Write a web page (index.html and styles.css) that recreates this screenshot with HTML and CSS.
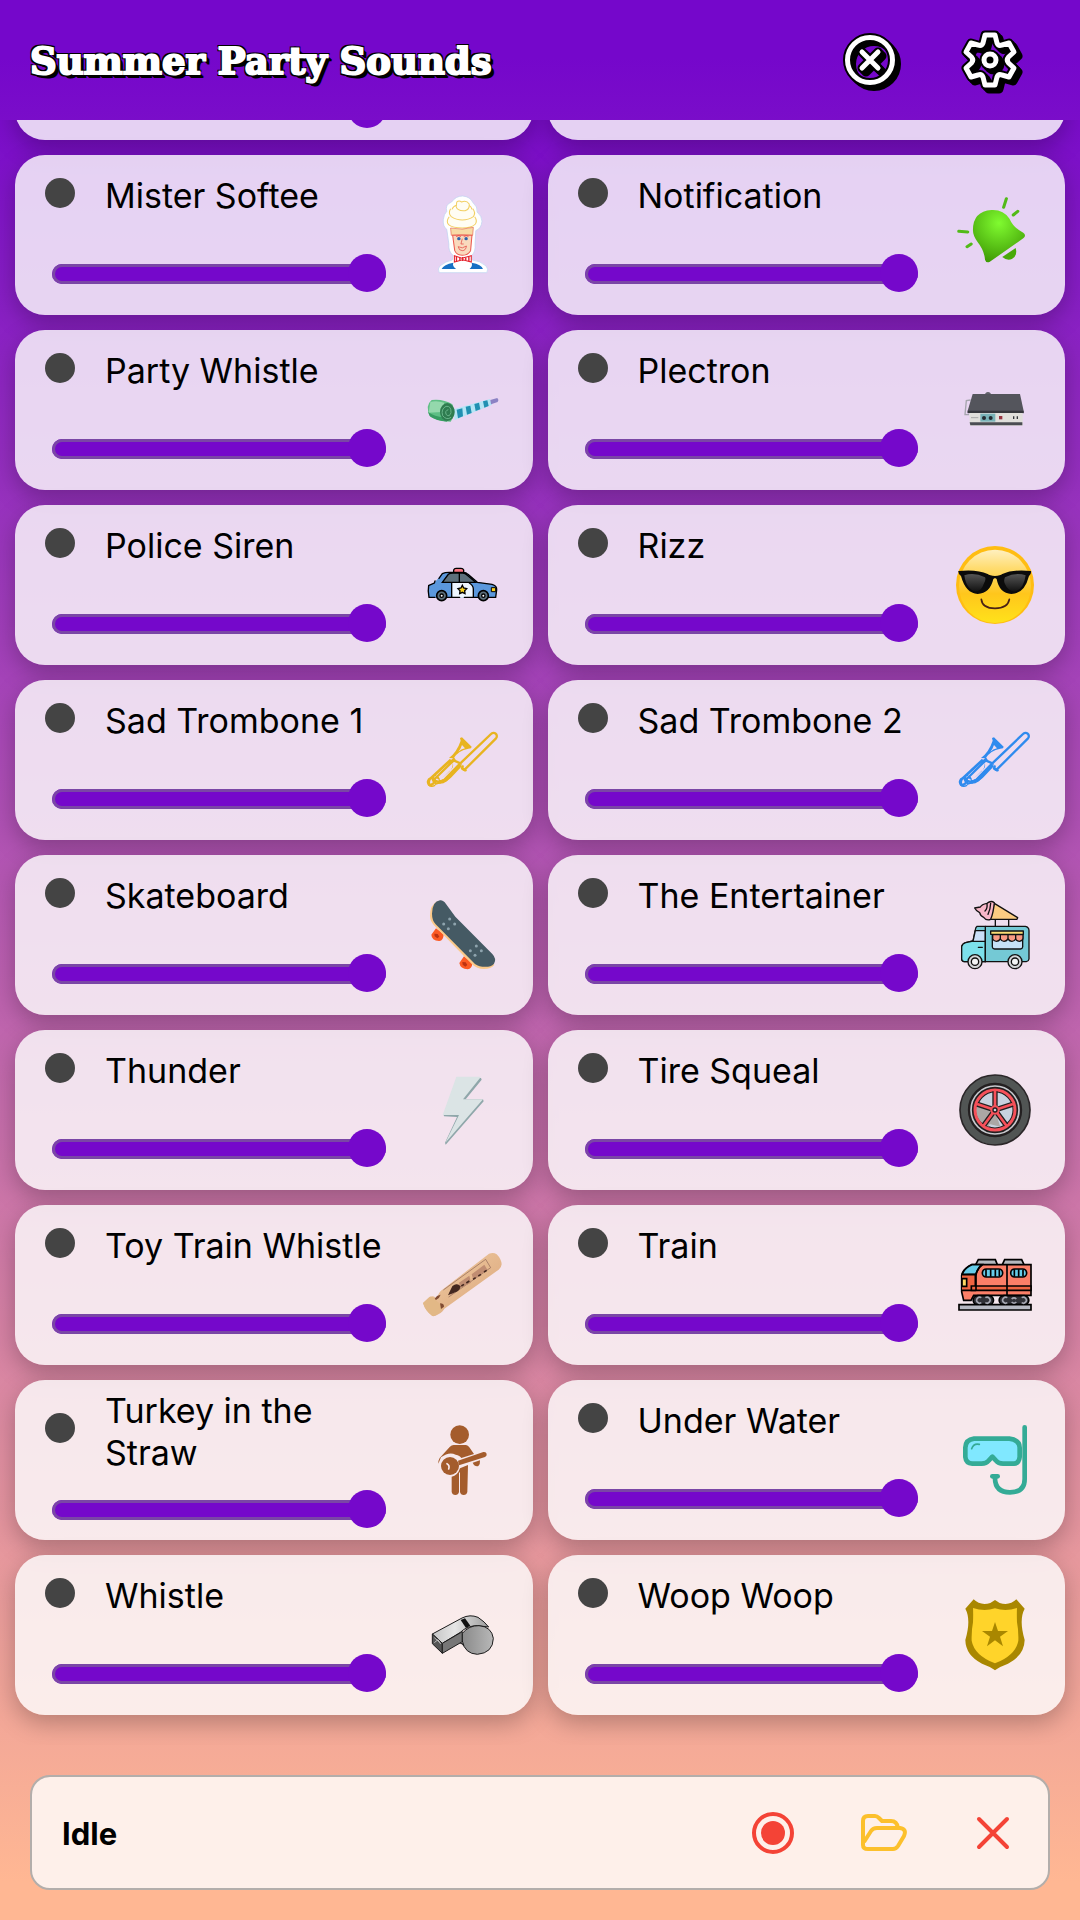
FILE: index.html
```html
<!DOCTYPE html>
<html lang="en">
<head>
  <meta charset="UTF-8" />
  <meta name="viewport" content="width=device-width, initial-scale=1.0" />
  <title>Summer Party Sounds</title>
  <link rel="stylesheet" href="styles.css">
</head>
<body>
  <svg class="sprite" aria-hidden="true">
    <defs>
      <radialGradient id="bellFill" cx="0.5" cy="0.25" r="0.75">
        <stop offset="0" stop-color="#80fb30" />
        <stop offset="1" stop-color="#409c05" />
      </radialGradient>
      <linearGradient id="faceFill" x1="0" y1="0" x2="0" y2="1">
        <stop offset="0" stop-color="#fff0c0" />
        <stop offset="0.25" stop-color="#ffdc70" />
        <stop offset="0.6" stop-color="#ffc61c" />
        <stop offset="1" stop-color="#ffe21a" />
      </linearGradient>
      <linearGradient id="lensFill" x1="0" y1="0" x2="0" y2="1">
        <stop offset="0" stop-color="#555" />
        <stop offset="1" stop-color="#111" />
      </linearGradient>
      <linearGradient id="woodFill" x1="0" y1="0" x2="1" y2="1">
        <stop offset="0" stop-color="#f2cfa6" />
        <stop offset="1" stop-color="#d9a378" />
      </linearGradient>
      <linearGradient id="metalFill" x1="0" y1="0" x2="1" y2="0">
        <stop offset="0" stop-color="#8a8a8a" />
        <stop offset="1" stop-color="#b8b8b8" />
      </linearGradient>
      <linearGradient id="metalTop" x1="0" y1="0" x2="1" y2="0">
        <stop offset="0" stop-color="#c4c4c4" />
        <stop offset="0.4" stop-color="#e6e6e6" />
        <stop offset="1" stop-color="#9c9c9c" />
      </linearGradient>
      <path id="gearShape" d="M-5-25H5L7-17Q8.5-13.500 12-15L19-17L24-8L18.500-3Q16 0 18.500 3L24 8L19 17L12 15Q8.500 13.500 7 17L5 25H-5L-7 17Q-8.500 13.500-12 15L-19 17L-24 8L-18.500 3Q-16 0-18.500-3L-24-8L-19-17L-12-15Q-8.500-13.500-7-17ZM6 0A6 6 0 1 1-6 0A6 6 0 1 1 6 0Z" />
      <path id="stopShape" d="M22.500 0A22.500 22.500 0 1 1-22.500 0A22.500 22.500 0 1 1 22.500 0ZM-8-8L8 8M8-8L-8 8" />
    </defs>

    <symbol id="softee" viewBox="1228 585 232 240" preserveAspectRatio="none">
      <path d="M1343 588q22 2 30 20q14 12 12 28q14 12 14 28q-2 22-18 28l-2 40q2 24-10 34l2 14q22 2 40 18q8 10 2 20h-138q-6-12 2-20q16-14 36-18l2-14q-14-12-12-34l-6-44q-12-8-10-30q2-16 10-24q-6-20 14-28q12-18 32-18Z" fill="#fff" stroke="#bcd3f0" stroke-width="2" />
      <g fill="#fffdf3" stroke="#f2cf62" stroke-width="3">
        <path d="M1304 650q-10 14-2 24q12 10 40 10t38-12q6-10-2-22" />
        <path d="M1308 626q-8 14 2 24q14 10 32 10t32-10q8-12-2-24" />
        <path d="M1326 606q6-6 14 0q14-6 22 6q2 16-12 20q-22 2-26-12Z" />
        <path d="M1312 628q4-10 14-12M1370 628q-2-8-8-12" />
      </g>
      <path d="M1308 684q34 8 66-2l-2 24q-30-4-62 0Z" fill="#f7dba7" stroke="#e56a50" stroke-width="2" />
      <path d="M1314 706h56l-4 46q-8 14-24 14t-22-14Z" fill="#f9d9bd" stroke="#ec5a50" stroke-width="3" />
      <circle cx="1332" cy="716" r="5" fill="#2e62a8" /><circle cx="1353" cy="716" r="5" fill="#2e62a8" />
      <path d="M1324 710q8-6 14 0M1346 710q8-6 14 0M1342 716l-4 16h8M1330 740q12 8 24-2q-2 14-12 14t-12-12Z" fill="none" stroke="#e23c3c" stroke-width="2" />
      <path d="M1319 767l22 8l27-8v19l-25-7l-24 7Z" fill="#fff" stroke="#e5202b" stroke-width="3" />
      <path d="M1325 770v14M1335 773v8M1343 771v12M1352 773v8M1361 770v14" stroke="#e5202b" stroke-width="4" />
      <path d="M1282 807q6-14 34-19q-4 10 8 19ZM1402 807q-4-14-33-19q4 10-6 19Z" fill="#1871c4" />
    </symbol>

    <symbol id="bell" viewBox="1205 585 232 240" preserveAspectRatio="none">
      <path d="M1257 690q0-56 54-60q34-2 52 26q12 28 40 42q10 8 0 17l-98 71q-10 4-13-7q-2-28-22-54q-13-18-13-35Z" fill="url(#bellFill)" />
      <path d="M1342 771l39-27q6 24-11 33q-14 6-28-6Z" fill="#48a909" />
      <path d="M1354 596l-8 26M1374 645l13-11M1216 694l26 2M1240 740l12-8" stroke="#52ba18" stroke-width="9" stroke-linecap="round" />
    </symbol>

    <symbol id="blower" viewBox="69 90 240 240">
      <path d="M160 208l110-31l6 17l-112 46Z" fill="#b5e5f5" />
      <path d="M170 209l17-4l2 24l-15 6ZM197 200l14-3l4 22l-14 5ZM223 192l14-4l4 20l-14 5ZM249 184l13-3l4 17l-13 5Z" fill="#2190b2" />
      <path d="M271 180l21-6q6 6 1 12l-20 7Z" fill="#8b82c4" />
      <path d="M95 180q35-4 62 13q14 27-5 52q-37-2-61-15q-18-32 4-50Z" fill="#5fbf85" />
      <path d="M91 186q18-6 42 2l-9 28l-38 2Z" fill="#94d8ac" />
      <path d="M84 216q20 14 48 16l10 13q-34-2-53-17Z" fill="#379c62" />
      <ellipse cx="142" cy="216" rx="22" ry="27" fill="#2f7c50" />
      <path d="M145 209q-12 4-6 15q9 9 14-6q1-21-15-19q-16 8-10 28q12 15 25 5" fill="none" stroke="#69b58a" stroke-width="3" />
    </symbol>

    <symbol id="plectron" viewBox="45 90 240 240">
      <path d="M92 180l-13 2l-4 42h12" fill="none" stroke="#a5a5ad" stroke-width="4" />
      <path d="M136 160q8-8 16 0v5h-16Z" fill="#62636b" />
      <path d="M98 162h142l11 51v7H83v-8Z" fill="#54555c" />
      <path d="M83 212h168v7H83Z" fill="#36373d" />
      <path d="M88 219h160v38H90Z" fill="#e0dfdb" />
      <path d="M89 247h158v9H91Z" fill="#4b4d53" />
      <path d="M121 221h45v24h-45Z" fill="#79b3b8" />
      <circle cx="132" cy="234" r="6" fill="#252c32" /><circle cx="152" cy="234" r="6" fill="#252c32" />
      <path d="M177 228h10v10h-10Z" fill="#983440" />
      <path d="M221 229v8M232 229v8" stroke="#33353b" stroke-width="4" />
      <path d="M93 233h22" stroke="#a8a8a8" stroke-width="3" />
    </symbol>

    <symbol id="police" viewBox="69 615 240 240">
      <path d="M85 736l18-8l24-27q8-4 20-4h42q10 0 15 6l28 24l44 6q15 4 14 16l-3 24H87q-4-18-2-37Z" fill="#5b98dc" />
      <path d="M154 729h54q12 8 12 18v26h-63Z" fill="#eef6ff" />
      <path d="M127 727l18-24q5-4 14-4h29q8 0 13 6l26 22Z" fill="#5d707b" stroke="#000" stroke-width="4" />
      <path d="M178 700v27M155 729v43M208 729q12 8 12 18v25M87 736l16-7l2-6M127 701l-10 14M127 701q8-4 20-4h42q10 0 15 6l28 24l44 6q15 4 14 16l-3 23h-24M86 736q-3 18 1 36h18M142 772h37M193 772h40" fill="none" stroke="#000" stroke-width="4" stroke-linecap="round" />
      <path d="M161 697v-7q2-5 7-5h15q6 0 8 5v7Z" fill="#fb7682" stroke="#000" stroke-width="4" />
      <circle cx="125" cy="767" r="15" fill="#5d707b" stroke="#000" stroke-width="5" /><circle cx="125" cy="767" r="5" fill="#fff" stroke="#000" stroke-width="4" />
      <circle cx="250" cy="767" r="15" fill="#5d707b" stroke="#000" stroke-width="5" /><circle cx="250" cy="767" r="5" fill="#fff" stroke="#000" stroke-width="4" />
      <path d="M274 743h13v12h-13Z" fill="#fbd320" stroke="#000" stroke-width="3" />
      <path d="M187 736l4 8l9 2l-6 6l1 9l-8-4l-8 4l1-9l-6-6l9-2Z" fill="#fbd320" stroke="#000" stroke-width="4" />
    </symbol>

    <symbol id="rizz" viewBox="45 615 240 240">
      <circle cx="165" cy="735" r="117" fill="#ffbd12" />
      <ellipse cx="165" cy="739" rx="108" ry="110" fill="url(#faceFill)" />
      <path d="M55 693q56-6 88 9q6 5 22 6q16-1 22-6q32-15 86-9q2 8-6 15q-14 54-53 54q-36-2-44-45l-5-3l-5 3q-10 43-47 45q-36-2-50-54q-9-6-8-15Z" fill="#0b0b0b" />
      <path d="M73 706q30-10 62 6q4 6-4 20q-6 20-24 23q-28-6-34-49ZM195 712q32-16 62-6q-6 43-34 49q-20-3-28-23q-5-10 0-20Z" fill="url(#lensFill)" />
      <path d="M124 778q3 27 41 27t43-27" fill="none" stroke="#4a2115" stroke-width="5" stroke-linecap="round" />
    </symbol>

    <symbol id="trombone" viewBox="69 90 240 240">
      <path d="M161 211l-57 56a14 14 0 0 1-17 17M181 220l92-88a9 9 0 0 1 15 13l-94 94M161 211l20 9l-49 50q-12 10-28 2M190 238l7 3M188 229l-2 7" fill="none" stroke="currentColor" stroke-width="7" stroke-linecap="round" />
      <path d="M150 206l-60 56a15 15 0 1 0 18 22l25-8q9-2 20-13l34-36l-14-2l-39 41q-8 5-15 5l30-27q12-14 8-24l10-11l-5-7l-9 8Zm-46 53q14-2 16 10l-9 9q-10-3-7-19Zm-10 8q3 12 12 16q-6 5-12 2q-8-7 0-18Zm15-12l36-33q10-6 14 1q2 8-5 15l-34 32q-14-4-11-15Z" fill="currentColor" fill-rule="evenodd" />
      <path d="M147 204q24-19 35-52l-2-8l6-2l29 28l-2 5l-8 1q-30 5-44 29Zm39-39q-5 15-11 20q8-7 20-10Z" fill="currentColor" fill-rule="evenodd" />
      <path d="M118 272q12 2 24-10l32-34l7-2l-43 47q-10 8-22 6Z" fill="currentColor" stroke="currentColor" stroke-width="4" />
      <path d="M188 236l8 5" fill="none" stroke="currentColor" stroke-width="8" />
    </symbol>

    <symbol id="skateboard" viewBox="69 615 240 240">
      <path d="M94 734l14-19l23 18q-1 21-14 20q-22-1-23-19ZM178 819l14-20l25 20q-1 18-14 19q-22-1-25-19Z" fill="#fb5a24" />
      <path d="M103 731l10 1l5 8l-6 5l-8-6ZM187 816l10 1l5 8l-6 5l-8-6Z" fill="#bd3211" />
      <path d="M112 634q-22 10-22 44q0 16 15 31l111 114q14 14 36 14q21 0 31-12Z" fill="#fbc989" />
      <path d="M120 631q10-1 18 11l28 38l111 112q14 15 5 29q-11 12-35 9q-17-1-28-14L107 703q-11-12-11-32q1-37 24-40Z" fill="#455a64" />
      <g fill="#8fa4ae">
        <circle cx="149" cy="687" r="4.500" /><circle cx="131" cy="702" r="4.500" /><circle cx="164" cy="702" r="4.500" /><circle cx="145" cy="716" r="4.500" />
        <circle cx="229" cy="768" r="4.500" /><circle cx="211" cy="782" r="4.500" /><circle cx="244" cy="782" r="4.500" /><circle cx="225" cy="796" r="4.500" />
      </g>
    </symbol>

    <symbol id="truck" viewBox="45 615 240 240">
      <g stroke="#111" stroke-width="4" stroke-linejoin="round" stroke-linecap="round">
        <path d="M166 687v22M206 687v22" fill="none" />
        <path d="M163 640l70 43l-2 5h-81Z" fill="#fccd82" />
        <path d="M163 638q-10-8-22 2q-16 3-20 11l-17 3q5 10 15 14q2 10 12 14q8 11 21 6q8-18 11-50Z" fill="#f7b6c8" />
        <path d="M141 641q2 15-6 22M152 640q-1 20-8 33" fill="none" />
        <path d="M111 709h145q11 2 11 13v85q-1 7-8 8H72q-7-2-7-9v-36q2-9 12-12l22-5l7-34q1-8 5-10Z" fill="#74c9d5" />
        <path d="M65 770q2-9 12-12l22-5h37v62H72q-7-2-7-9Z" fill="#7ce0eb" />
        <path d="M106 722h30v32H99Z" fill="#cbdff8" />
        <path d="M136 709v106M115 772h12" fill="none" />
        <path d="M157 734h91v37q-1 6-7 6h-77q-6 0-7-6Z" fill="#c6e1f6" />
        <path d="M158 734h91v11q0 7-11 9q-9-1-11-7q-4 7-11 7t-12-7q-5 7-12 7t-11-7q-5 7-12 7t-11-7Z" fill="#f99b84" />
        <path d="M181 735v12M204 735v12M227 735v12" fill="none" />
        <path d="M152 723h98v10h-98Z" fill="#fadc74" />
        <circle cx="105" cy="815" r="21" fill="#d5d7da" /><circle cx="105" cy="815" r="11" fill="#f4f5f6" />
        <circle cx="225" cy="815" r="21" fill="#d5d7da" /><circle cx="225" cy="815" r="11" fill="#f4f5f6" />
      </g>
    </symbol>

    <symbol id="thunder" viewBox="69 90 240 240">
      <path d="M173 112l70 2l2 5l-48 59h52l2 6L137 314l-2-6l36-77l-39-2l-1-5Z" fill="#8fa7aa" />
      <path d="M169 110h74l-54 68h60L136 308l41-83h-49Z" fill="#dbe4e5" />
    </symbol>

    <symbol id="tire" viewBox="45 90 240 240">
      <circle cx="165" cy="210" r="105" fill="#515554" stroke="#2a2628" stroke-width="5" />
      <circle cx="165" cy="210" r="78" fill="#c7c9ce" stroke="#231f20" stroke-width="7" />
      <circle cx="165" cy="210" r="61" fill="#c8d2df" stroke="#231f20" stroke-width="17" />
      <path d="M108 196l55 14l-17 50q-44-17-38-64ZM148 252l17-38l16 46Z" fill="#aba7a5" />
      <circle cx="165" cy="210" r="60" fill="none" stroke="#f6515a" stroke-width="9" />
      <path d="M165 210v-56M165 210l53-17M165 210l33 45M165 210l-33 45M165 210l-53-17" stroke="#231f20" stroke-width="16" />
      <path d="M165 210v-58M165 210l54-18M165 210l35 48M165 210l-35 48M165 210l-54-18" stroke="#f6515a" stroke-width="8" />
      <circle cx="165" cy="210" r="14" fill="#f6515a" /><circle cx="165" cy="210" r="6" fill="#c8d2df" stroke="#231f20" stroke-width="4" />
    </symbol>

    <symbol id="woodWhistle" viewBox="69 615 240 240">
      <path d="M69 789l19-18q10-5 17 0l5 6q4-20 20-30L267 641q14-5 23 2q14 14 15 30q-1 11-9 16L133 806q-3 8-18 17q-9 7-18 5q-20-14-28-39Z" fill="url(#woodFill)" />
      <path d="M69 789l21-19q10 0 17 10l24 22q-16 26-34 26q-22-16-28-39Z" fill="#e2b886" />
      <path d="M104 776l7-8l11-4q-4 12-14 16ZM120 790q12 0 12 10l-9 7Z" fill="#804b32" />
      <path d="M130 750l127-92l15 25l-126 88" fill="none" stroke="#8c6455" stroke-width="2" />
      <path d="M147 760l9-18q12-14 24-6l-5 11l-13 7l-5 11ZM177 728l31-21l5 21l-31 16ZM215 703l38-29l9 15l-42 30Z" fill="#c08d72" />
      <path d="M149 761l10-21q11-9 20 0q-3 11-16 15ZM184 738l8-5M199 729l9-6M219 718l8-5M235 708l8-5M252 696l8-5" fill="#442820" stroke="#442820" stroke-width="5" />
    </symbol>

    <symbol id="train" viewBox="45 615 240 240">
      <g stroke="#000" stroke-width="5">
        <path d="M107 674l8-15h51l6 15M187 674l7-15h51l7 15" fill="#b6b9bf" />
        <path d="M94 674h179v92h-172l-8 15H71l-6-25v-49q3-20 29-33Z" fill="#fb7f68" />
        <path d="M66 704q7-20 30-30h29q-10 8-17 28Z" fill="#66cce9" />
        <path d="M66 704h40v47H66" fill="#ef6441" />
        <path d="M94 738h179v13H94Z" fill="#ef6441" />
        <path d="M66 716h14v23H66Z" fill="#fbd763" />
        <path d="M201 674v92M128 674q-20 14-20 34v43" fill="none" />
        <rect x="127" y="687" width="61" height="24" rx="12" fill="#66cce9" />
        <rect x="212" y="687" width="48" height="24" rx="12" fill="#66cce9" />
        <path d="M138 688v22M152 688v22M166 688v22M178 689v19M223 688v22M236 688v22M249 689v20" />
        <path d="M113 767a13 13 0 1 0 0 27h34a13 13 0 1 0 0-27ZM191 767a13 13 0 1 0 0 27h62a13 13 0 1 0 0-27Z" fill="#303137" />
        <path d="M57 794h216v16H57Z" fill="#b6b9c3" />
      </g>
      <path d="M124 773a9 9 0 1 0 0 15M136 773a9 9 0 1 1 0 15M202 773a9 9 0 1 0 0 15M215 777q7-7 14 0M215 786q7 7 14 0M245 773a9 9 0 1 1 0 15" fill="none" stroke="#a4a6b1" stroke-width="5" />
    </symbol>

    <symbol id="banjo" viewBox="69 120 240 240">
      <g fill="#a45c2c">
        <circle cx="179" cy="164" r="28" />
        <path d="M161 195h37q6 1 10 7l14 20l-38 12q-4-8-17-10q-20-10-44 8l-8 19q-2-6 4-17l30-33q6-6 12-6Z" />
        <path d="M204 255l-2 81q-2 9-11 9t-11-9v-59l-3 1v58q-2 9-11 9t-11-9v-46q18-3 25-25q10-4 24-10Z" />
        <circle cx="150" cy="258" r="27" />
        <path d="M174 242l76-26q9-1 10 6q1 6-5 9l-78 25Z" />
        <path d="M218 248l22-7q1 12-5 17q-11 3-17-10Z" />
      </g>
      <path d="M141 251q9 5 5 16" fill="none" stroke="#f9e9ec" stroke-width="5" stroke-linecap="round" />
    </symbol>

    <symbol id="whistle" viewBox="69 645 240 240">
      <g stroke="#1c1c1c" stroke-width="3" stroke-linejoin="round">
        <path d="M97 762l89-48q24-12 48-2q20 13 32 29l-34-4q-30 0-51 20l-54 33Z" fill="url(#metalTop)" />
        <path d="M97 762l30 28v30l-30-29Z" fill="#555" />
        <path d="M127 790l60-35v30l-60 35Z" fill="#777" />
        <path d="M180 789l8 2l4 8" fill="#444" />
        <path d="M187 760q20-24 50-23q38 3 43 38q-1 44-48 48q-38-2-45-40Z" fill="url(#metalFill)" />
        <path d="M103 773l18 16M103 788l11-9l8 13" fill="none" stroke="#bbb" />
      </g>
      <path d="M182 720l13-5l16 22l-13 7Z" fill="#111" />
    </symbol>

    <symbol id="snorkel" viewBox="45 120 240 240">
      <g fill="none" stroke="#34ab96" stroke-width="14" stroke-linecap="round" stroke-linejoin="round">
        <path d="M254 142v155q0 40-44 40q-44 0-45-41" />
        <path d="M157 289h16" />
        <path d="M102 176h106q31 4 31 27v28q-2 19-17 20h-33q-14 0-21-9l-11-12l-11 12q-7 9-21 9h-28q-19-1-21-20v-28q1-24 26-27Z" fill="#80e8ff" />
      </g>
      <path d="M95 206q6-17 23-13" fill="none" stroke="#34ab96" stroke-width="5" stroke-linecap="round" />
    </symbol>

    <symbol id="badge" viewBox="45 645 240 240">
      <path d="M101 658q20 20 50 11l14-9l14 9q30 9 50-11l25 28q-18 33 0 94q-1 46-50 71q-27 10-39 20q-12-10-39-20q-49-25-50-71q18-61 0-94Z" fill="#a98700" />
      <path d="M99 684q34 12 66 1q32 11 66-1q-1 17 0 43q5 25 4 55q-8 44-70 68q-62-24-70-68q-1-30 4-55q1-26 0-43Z" fill="#ffd42a" />
      <path d="M165 726l9 27h30l-24 17l9 29l-24-18l-24 18l9-29l-24-17h30Z" fill="#a98700" />
    </symbol>
  </svg>

  <header class="header">
    <h1 class="title">Summer Party Sounds</h1>
    <div class="header-actions">
      <button type="button" class="header-button" aria-label="Stop all">
        <svg class="outlined" viewBox="-40 -40 80 80">
          <g class="outline"><use href="#stopShape" /><use href="#stopShape" x="2" y="2" /><use href="#stopShape" x="4" y="4" /></g>
          <use href="#stopShape" />
        </svg>
      </button>
      <button type="button" class="header-button" aria-label="Settings">
        <svg class="outlined" viewBox="-40 -40 80 80">
          <g class="outline"><use href="#gearShape" /><use href="#gearShape" x="2" y="2" /><use href="#gearShape" x="4" y="4" /></g>
          <use href="#gearShape" />
        </svg>
      </button>
    </div>
  </header>

  <main class="sounds" id="sounds"></main>

  <footer class="status">
    <div class="status-text">Idle</div>
    <div class="status-actions">
      <button type="button" class="status-button" aria-label="Record">
        <svg viewBox="0 0 48 48"><circle cx="24" cy="24" r="19" fill="none" stroke="#f44336" stroke-width="4" /><circle cx="24" cy="24" r="12" fill="#f44336" /></svg>
      </button>
      <button type="button" class="status-button" aria-label="Open">
        <svg viewBox="0 0 48 48" fill="none" stroke="#fcc02c" stroke-width="4" stroke-linejoin="round"><path d="M4 36V12q0-5 5-5h7q2 0 4 2l3 3h9q6 0 7 7M4 36q0 4 5 4h25q3 0 5-3l6-10q3-7-4-8H18q-4 0-6 3L5 33" /></svg>
      </button>
      <button type="button" class="status-button" aria-label="Clear">
        <svg viewBox="0 0 48 48" stroke="#f44336" stroke-width="4" stroke-linecap="round"><path d="M10 10l28 28M38 10L10 38" /></svg>
      </button>
    </div>
  </footer>

  <script src="script.js"></script>
</body>
</html>
```

FILE: styles.css
```css
* {
  box-sizing: border-box;
}

body {
  margin: 0;
  height: 100vh;
  display: flex;
  flex-direction: column;
  overflow: hidden;
  font-family: Inter, "Liberation Sans", sans-serif;
  color: #000;
  background: linear-gradient(#7507cb 3%, #ffb793 98%);
}

button {
  display: flex;
  align-items: center;
  justify-content: center;
  margin: 0;
  padding: 0;
  border: none;
  background: none;
  cursor: pointer;
}

.sprite {
  position: absolute;
  width: 0;
  height: 0;
}

/* Header */
.header {
  flex: none;
  display: flex;
  align-items: center;
  justify-content: space-between;
  height: 120px;
  padding: 0 30px;
}

.title {
  margin: 0;
  padding-top: 2px;
  font-family: "DejaVu Serif", serif;
  font-size: 37px;
  font-weight: bold;
  color: #fff;
  -webkit-text-stroke: 2px #fff;
  text-shadow: -2px -2px 0 #000, 2px -2px 0 #000, -2px 2px 0 #000, 2px 2px 0 #000, 3px 3px 0 #000, 4px 4px 0 #000;
}

.header-actions {
  display: flex;
}

.header-button {
  width: 120px;
  height: 80px;
}

.outlined {
  width: 80px;
  height: 80px;
  fill: none;
  stroke: #fff;
  stroke-width: 5;
  stroke-linecap: round;
  stroke-linejoin: round;
}

.outline {
  stroke: #000;
  stroke-width: 9;
}

/* Sound list */
.sounds {
  flex: 1;
  min-height: 0;
  display: grid;
  grid-template-columns: repeat(2, 1fr);
  grid-auto-rows: 160px;
  gap: 15px;
  padding: 15px 15px 30px;
  overflow-y: auto;
  scrollbar-width: none;
}

.card {
  display: flex;
  align-items: center;
  gap: 30px;
  padding: 0 30px;
  border-radius: 30px;
  background: rgba(252, 252, 252, 0.82);
  box-shadow: 0 8px 25px rgba(0, 0, 0, 0.25);
}

.controls {
  flex: 1;
  height: 160px;
  padding: 1px 0 3px;
  display: flex;
  flex-direction: column;
  justify-content: space-around;
}

.name-row {
  display: flex;
  align-items: center;
  gap: 30px;
}

.light {
  flex: none;
  width: 30px;
  height: 30px;
  margin-bottom: 7px;
  border-radius: 50%;
  background: #444;
}

.name {
  font-size: 34px;
  line-height: 42px;
}

.volume {
  appearance: none;
  height: 38px;
  margin: 0 7px;
  background: none;
}

.volume::-webkit-slider-runnable-track {
  height: 20px;
  border-radius: 10px;
  background: #7508cb;
  box-shadow: inset 0 0 0 3px #7a46a6;
}

.volume::-webkit-slider-thumb {
  appearance: none;
  width: 38px;
  height: 38px;
  margin-top: -10px;
  border-radius: 50%;
  background: #7508cb;
}

.play,
.play svg {
  flex: none;
  width: 80px;
  height: 80px;
}

/* Status bar */
.status {
  flex: none;
  display: flex;
  align-items: center;
  justify-content: space-between;
  height: 115px;
  margin: 30px;
  padding: 0 15px 0 30px;
  border: 2px solid #b3aeab;
  border-radius: 20px;
  background: #fef0ea;
}

.status-text {
  padding-top: 2px;
  font-size: 31px;
  font-weight: bold;
}

.status-actions {
  display: flex;
  gap: 30px;
}

.status-button {
  width: 80px;
  height: 80px;
}

.status-button svg {
  width: 48px;
  height: 48px;
}
```

FILE: script.js
```js
const sounds = [
  { name: "Merry Go Round Music", icon: "truck" },
  { name: "Microwave", icon: "bell" },
  { name: "Mister Softee", icon: "softee" },
  { name: "Notification", icon: "bell" },
  { name: "Party Whistle", icon: "blower" },
  { name: "Plectron", icon: "plectron" },
  { name: "Police Siren", icon: "police" },
  { name: "Rizz", icon: "rizz" },
  { name: "Sad Trombone 1", icon: "trombone", color: "#e8b420" },
  { name: "Sad Trombone 2", icon: "trombone", color: "#2f8bee" },
  { name: "Skateboard", icon: "skateboard" },
  { name: "The Entertainer", icon: "truck" },
  { name: "Thunder", icon: "thunder" },
  { name: "Tire Squeal", icon: "tire" },
  { name: "Toy Train Whistle", icon: "woodWhistle" },
  { name: "Train", icon: "train" },
  { name: "Turkey in the Straw", icon: "banjo" },
  { name: "Under Water", icon: "snorkel" },
  { name: "Whistle", icon: "whistle" },
  { name: "Woop Woop", icon: "badge" }
];

const list = document.getElementById("sounds");

sounds.forEach((sound, i) => {
  const card = document.createElement("div");
  card.className = "card";
  card.innerHTML = `
    <div class="controls">
      <div class="name-row">
        <span class="light"></span>
        <label class="name" for="volume${i}">${sound.name}</label>
      </div>
      <input class="volume" id="volume${i}" type="range" min="0" max="100" value="100">
    </div>
    <button type="button" class="play" aria-label="Play ${sound.name}">
      <svg><use href="#${sound.icon}"></use></svg>
    </button>`;
  if (sound.color) card.querySelector(".play").style.color = sound.color;
  list.appendChild(card);
});

// start at the end of the list
list.scrollTop = list.scrollHeight;
```
